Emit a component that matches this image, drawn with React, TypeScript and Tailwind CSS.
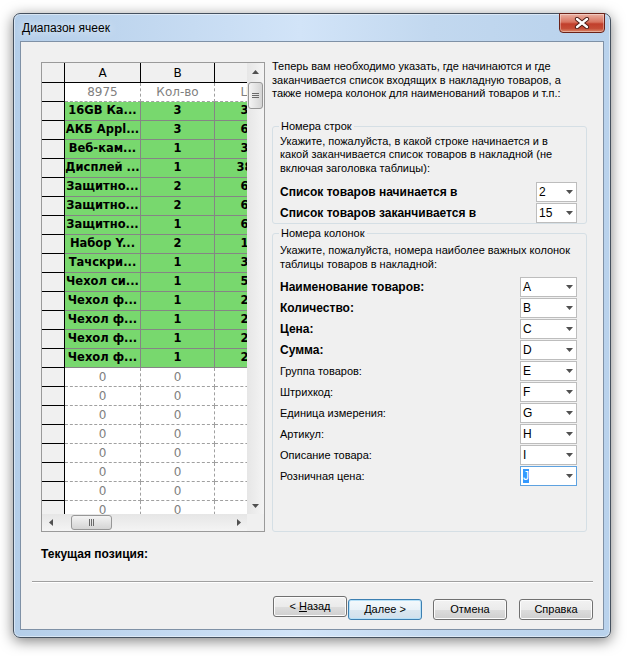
import React from "react";

const ui = "font-['Liberation_Sans',Arial,sans-serif]";
const gridFont = "font-['DejaVu_Sans',Verdana,sans-serif]";

const colW = ["w-[76px]", "w-[74px]", "w-[84px]"];

const goods: [string, string, string][] = [
  ["16GB Ка...", "3", "3500"],
  ["АКБ Appl...", "3", "6500"],
  ["Веб-кам...", "1", "3200"],
  ["Дисплей ...", "1", "38500"],
  ["Защитно...", "2", "6000"],
  ["Защитно...", "2", "6000"],
  ["Защитно...", "1", "6000"],
  ["Набор Y...", "2", "1500"],
  ["Тачскри...", "1", "3000"],
  ["Чехол си...", "1", "5000"],
  ["Чехол ф...", "1", "2500"],
  ["Чехол ф...", "1", "2500"],
  ["Чехол ф...", "1", "2500"],
  ["Чехол ф...", "1", "2500"],
];

const RowHead = () => (
  <div className="w-[23px] shrink-0 border-r border-b border-black bg-[#f0f0f0]" />
);

const Arrow = ({ dir }: { dir: "up" | "down" | "left" | "right" }) => {
  const d = {
    up: "M0 4L3.5 0L7 4z",
    down: "M0 0h7L3.5 4z",
    left: "M4 0v7L0 3.5z",
    right: "M0 0v7L4 3.5z",
  }[dir];
  const vert = dir === "up" || dir === "down";
  return (
    <svg width={vert ? 7 : 4} height={vert ? 4 : 7} viewBox={vert ? "0 0 7 4" : "0 0 4 7"}>
      <path d={d} fill="#505050" />
    </svg>
  );
};

const Sheet = () => (
  <div className={`${gridFont} ml-[20px] mt-[20px] w-[224px] h-[470px] shrink-0 border border-[#9a9a9a] flex flex-col`}>
    <div className="flex h-[451px]">
      {/* cells */}
      <div className="w-[205px] h-[451px] overflow-hidden bg-white">
        <div className="flex h-[20px]">
          <RowHead />
          {["A", "B", "C"].map((c, i) => (
            <div key={c} className={`${colW[i]} shrink-0 border-r border-b border-black bg-[#f0f0f0] flex items-center justify-center text-[12px] text-black`}>
              {c}
            </div>
          ))}
        </div>
        <div className="flex h-[19px]">
          <RowHead />
          {["8975", "Кол-во", "Цена"].map((c, i) => (
            <div key={c} className={`${colW[i]} shrink-0 border-r border-b border-dashed border-[#a0a0a0] flex items-center justify-center text-[12px] text-[#808080] whitespace-nowrap`}>
              {c}
            </div>
          ))}
        </div>
        {goods.map((g, r) => (
          <div key={r} className="flex h-[19px]">
            <RowHead />
            {g.map((c, i) => (
              <div key={i} className={`${colW[i]} shrink-0 border-r border-b border-[#858585] bg-[#78d86e] flex items-center justify-center text-[11.5px] font-bold text-black whitespace-nowrap overflow-hidden`}>
                {c}
              </div>
            ))}
          </div>
        ))}
        {Array.from({ length: 8 }).map((_, r) => (
          <div key={r} className="flex h-[19px]">
            <RowHead />
            {[0, 1, 2].map((i) => (
              <div key={i} className={`${colW[i]} shrink-0 border-r border-b border-dashed border-[#a0a0a0] flex items-center justify-center text-[12px] text-[#808080]`}>
                0
              </div>
            ))}
          </div>
        ))}
      </div>
      {/* vertical scrollbar */}
      <div className="w-[17px] flex flex-col bg-[linear-gradient(to_right,#e6e6e6,#f4f4f4)]">
        <div className="h-[17px] flex items-center justify-center">
          <Arrow dir="up" />
        </div>
        <div className="h-[2px]" />
        <div className="h-[27px] mx-[1px] rounded-[3px] border border-[#979797] bg-[linear-gradient(to_right,#f4f4f4,#e4e4e4_50%,#d4d4d4)] flex flex-col items-center justify-center gap-[1px]">
          <div className="w-[7px] h-[1px] bg-[#6a6a6a]" />
          <div className="w-[7px] h-[1px] bg-[#6a6a6a]" />
          <div className="w-[7px] h-[1px] bg-[#6a6a6a]" />
        </div>
        <div className="flex-1" />
        <div className="h-[17px] flex items-center justify-center">
          <Arrow dir="down" />
        </div>
      </div>
    </div>
    {/* horizontal scrollbar */}
    <div className="flex h-[17px]">
      <div className="w-[205px] flex bg-[linear-gradient(to_bottom,#e6e6e6,#f4f4f4)]">
        <div className="w-[17px] flex items-center justify-center">
          <Arrow dir="left" />
        </div>
        <div className="w-[12px]" />
        <div className="w-[41px] my-[1px] rounded-[3px] border border-[#979797] bg-[linear-gradient(to_bottom,#f4f4f4,#e4e4e4_50%,#d4d4d4)] flex items-center justify-center gap-[1px]">
          <div className="w-[1px] h-[7px] bg-[#6a6a6a]" />
          <div className="w-[1px] h-[7px] bg-[#6a6a6a]" />
          <div className="w-[1px] h-[7px] bg-[#6a6a6a]" />
        </div>
        <div className="flex-1" />
        <div className="w-[17px] flex items-center justify-center">
          <Arrow dir="right" />
        </div>
      </div>
      <div className="w-[17px] bg-[#f0f0f0]" />
    </div>
  </div>
);

const Combo = ({ value, w, focused }: { value: string; w: string; focused?: boolean }) => (
  <div className={`${w} h-[20px] shrink-0 bg-white border ${focused ? "border-[#5ea2e0]" : "border-[#bdbdbd]"} flex items-center justify-between pl-[2px] pr-[3px]`}>
    <span className={`text-[12px] leading-[14px] ${focused ? "bg-[#3399ff] text-white" : "text-black"}`}>{value}</span>
    <Arrow dir="down" />
  </div>
);

const Field = ({ label, bold, value, w, focused }: { label: string; bold?: boolean; value: string; w: string; focused?: boolean }) => (
  <div className="flex items-center justify-between h-[20px]">
    <span className={bold ? "text-[12px] font-bold" : "text-[11px]"}>{label}</span>
    <Combo value={value} w={w} focused={focused} />
  </div>
);

const columns: [string, boolean, string][] = [
  ["Наименование товаров:", true, "A"],
  ["Количество:", true, "B"],
  ["Цена:", true, "C"],
  ["Сумма:", true, "D"],
  ["Группа товаров:", false, "E"],
  ["Штрихкод:", false, "F"],
  ["Единица измерения:", false, "G"],
  ["Артикул:", false, "H"],
  ["Описание товара:", false, "I"],
  ["Розничная цена:", false, "J"],
];

const Button = ({ children, primary }: { children: React.ReactNode; primary?: boolean }) => (
  <button
    className={`w-[74px] h-[21px] rounded-[3px] border text-[11px] leading-[19px] text-black text-center whitespace-pre ${
      primary
        ? "border-[#3c7fb1] shadow-[inset_0_0_0_1px_#b6e0f7] bg-[linear-gradient(to_bottom,#f4f9fc_0%,#e9f2f8_50%,#dbe7f0_51%,#d0e0ec_100%)]"
        : "border-[#707070] shadow-[inset_0_0_0_1px_#fcfcfc] bg-[linear-gradient(to_bottom,#f2f2f2_0%,#ebebeb_50%,#dddddd_51%,#cfcfcf_100%)]"
    }`}
  >
    {children}
  </button>
);

export default function App() {
  return (
    <div className={`${ui} w-[629px] h-[656px] bg-white pt-[13px] pl-[13px] text-black`}>
      <div className="relative w-[598px] h-[625px] rounded-[7px] border border-[#45515f] px-[6px] pb-[7px] flex flex-col bg-[linear-gradient(90deg,#b4cee9_0%,#c6dbf2_30%,#d2e4f8_48%,#c2d8ef_70%,#b9d2ec_100%)] shadow-[0_3px_14px_rgba(0,0,0,0.5),inset_0_0_0_1px_rgba(255,255,255,0.45)]">
        <div className="h-[27px] flex items-center pl-[2px] text-[12px] [text-shadow:0_0_8px_rgba(255,255,255,0.95)]">
          Диапазон ячеек
        </div>
        <div className="absolute right-[5px] top-[-1px] w-[46px] h-[20px] rounded-b-[4px] border border-[#6b2218] flex items-center justify-center bg-[linear-gradient(to_bottom,#eab0a2_0%,#d8735f_45%,#c13f2c_55%,#c54c36_80%,#dc8a6c_100%)] shadow-[inset_0_0_0_1px_rgba(255,255,255,0.35)]">
          <svg width="16" height="12" viewBox="0 0 16 12">
            <path d="M3 2l10 8M13 2L3 10" stroke="#4a1b14" strokeWidth="4.2" strokeLinecap="round" />
            <path d="M3 2l10 8M13 2L3 10" stroke="#ffffff" strokeWidth="2.4" strokeLinecap="round" />
          </svg>
        </div>

        <div className="flex-1 border border-[#7f91a6] bg-[#f0f0f0] flex flex-col">
          <div className="flex">
            <Sheet />
            <div className="ml-[7px] mt-[18px] w-[315px] flex flex-col">
              <p className="text-[11px] leading-[13.5px] pr-[10px]">
                Теперь вам необходимо указать, где начинаются и где заканчивается список входящих в накладную товаров, а также номера колонок для наименований товаров и т.п.:
              </p>

              <fieldset className="mt-[19px] border border-[#d5dfe5] rounded-[3px] px-[7px] pr-[9px]">
                <legend className="ml-[-1px] px-[2px] text-[11px] leading-[13px]">Номера строк</legend>
                <p className="mt-[2px] text-[11px] leading-[13.5px]">
                  Укажите, пожалуйста, в какой строке начинается и в какой заканчивается список товаров в накладной (не включая заголовка таблицы):
                </p>
                <div className="mt-[7px] flex flex-col gap-[1px]">
                  <Field label="Список товаров начинается в" bold value="2" w="w-[41px]" />
                  <Field label="Список товаров заканчивается в" bold value="15" w="w-[41px]" />
                </div>
              </fieldset>

              <fieldset className="mt-[3px] border border-[#d5dfe5] rounded-[3px] px-[7px] pr-[9px] pb-[45px]">
                <legend className="ml-[-1px] px-[2px] text-[11px] leading-[13px]">Номера колонок</legend>
                <p className="mt-[4px] text-[11px] leading-[13.5px]">
                  Укажите, пожалуйста, номера наиболее важных колонок таблицы товаров в накладной:
                </p>
                <div className="mt-[6px] flex flex-col gap-[1px]">
                  {columns.map(([label, bold, v]) => (
                    <Field key={v} label={label} bold={bold} value={v} w="w-[57px]" focused={v === "J"} />
                  ))}
                </div>
              </fieldset>
            </div>
          </div>

          <div className="ml-[20px] mt-[15px] text-[12px] leading-[15px] font-bold">Текущая позиция:</div>
          <div className="ml-[11px] mt-[19px] w-[561px] border-t border-t-[#a0a0a0] border-b border-b-white" />
          <div className="ml-[252px] mt-[13px] flex">
            <Button>
              {"< "}
              <span className="underline">Н</span>азад
            </Button>
            <div className="ml-[1px]">
              <Button primary>Далее &gt;</Button>
            </div>
            <div className="ml-[11px]">
              <Button>Отмена</Button>
            </div>
            <div className="ml-[12px]">
              <Button>Справка</Button>
            </div>
          </div>
        </div>
      </div>
    </div>
  );
}
